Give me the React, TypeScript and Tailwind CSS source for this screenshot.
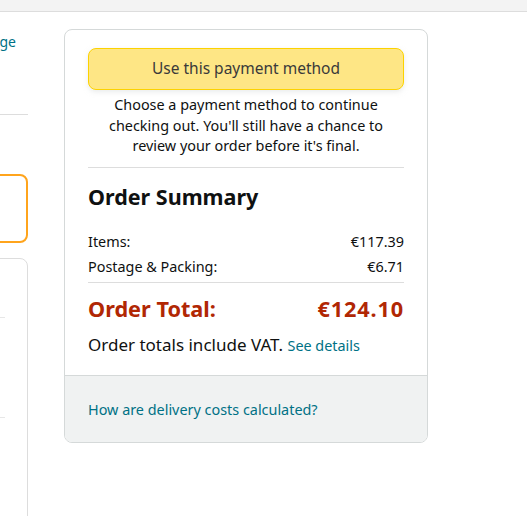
export default function App() {
  return (
    <div className="h-[516px] w-[527px] overflow-hidden bg-white font-['Noto_Sans',_'Open_Sans',_sans-serif] text-[#0f1111]">
      <div className="h-[12px] border-b border-[#dddddd] bg-[#f3f3f3]" />

      <div className="flex items-start gap-[36px] pt-[17px]">
        {/* left column, mostly off-screen */}
        <div className="w-[28px] shrink-0 overflow-hidden">
          <div className="ml-[-212px] w-[240px]">
            <div className="pr-3 pt-[3px] text-right text-[14px] leading-[20px] text-[#007185]">Change</div>
            <div className="h-[63px] border-b border-[#dddddd]" />
            <div className="mt-[59px] h-[69px] rounded-lg border-2 border-[#ffa41c]" />
            <div className="mt-[15px] h-[300px] rounded-lg border border-[#dddddd] pr-[22px]">
              <div className="h-[59px] border-b border-[#e7e7e7]" />
              <div className="h-[100px] border-b border-[#e7e7e7]" />
            </div>
          </div>
        </div>

        {/* order summary card */}
        <div className="w-[364px] shrink-0 overflow-hidden rounded-lg border border-[#d5d9d9]">
          <div className="px-[23px] pt-[18px]">
            <button className="h-[42px] w-full rounded-lg border border-[#fcd200] bg-[#fee685] text-[15.5px] text-[#3a3a3a] shadow-[0_2px_5px_rgba(213,217,217,0.5)]">
              Use this payment method
            </button>
            <p className="mt-[5px] text-center text-[14.4px] leading-[20.5px]">
              Choose a payment method to continue checking out. You'll still have a chance to review your order
              before it's final.
            </p>
            <div className="mt-[10px] border-t border-[#dddddd]" />
            <h2 className="mt-[14px] text-[21.5px] font-bold leading-[30px]">Order Summary</h2>
            <div className="mt-[17px] text-[14.4px] leading-[25px]">
              <div className="flex justify-between">
                <span>Items:</span>
                <span>€117.39</span>
              </div>
              <div className="flex justify-between">
                <span>Postage &amp; Packing:</span>
                <span>€6.71</span>
              </div>
            </div>
            <div className="mt-[3px] border-t border-[#dddddd]" />
            <div className="mt-[10px] flex justify-between text-[21.7px] font-bold leading-[32px] text-[#b12704]">
              <span>Order Total:</span>
              <span className="tracking-[0.04em]">€124.10</span>
            </div>
            <div className="mt-[8px] pb-[17px] text-[17px] leading-[24px]">
              Order totals include VAT. <a className="text-[14.4px] text-[#007185]">See details</a>
            </div>
          </div>
          <div className="border-t border-[#d5d9d9] bg-[#f0f2f2] px-[23px] pb-[22px] pt-[24px]">
            <a className="block text-[14.4px] leading-[20px] text-[#007185]">How are delivery costs calculated?</a>
          </div>
        </div>
      </div>
    </div>
  )
}
